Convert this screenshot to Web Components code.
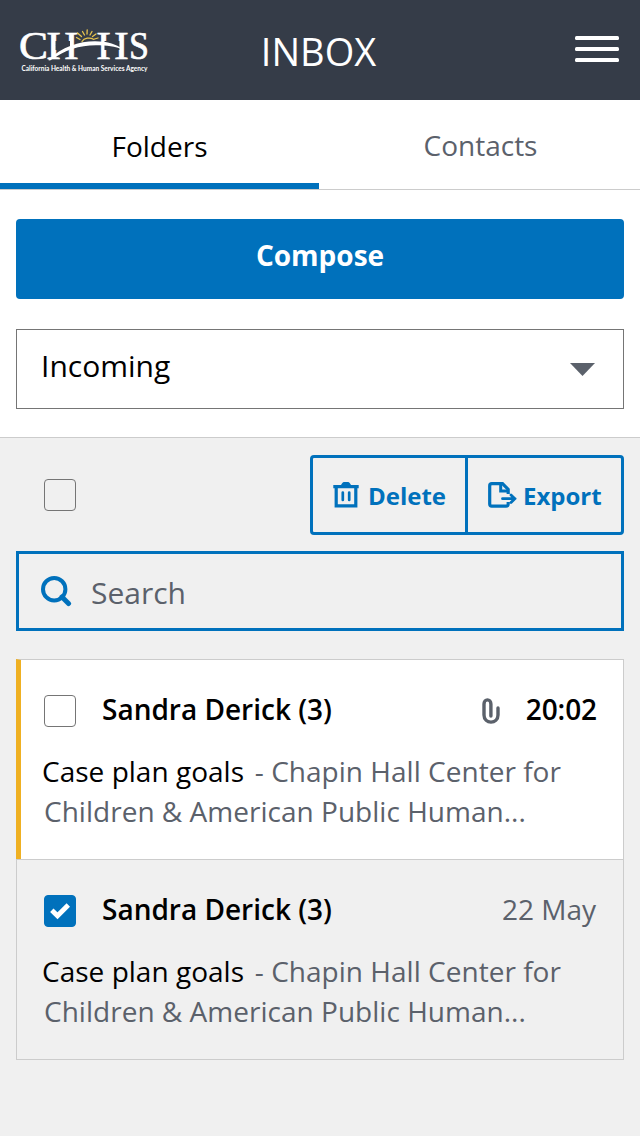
<!DOCTYPE html>
<html lang="en">
<head>
<meta charset="utf-8">
<title>Inbox</title>
<style>
html,body{margin:0;padding:0}
body{--blue:#0071bc;--gray:#5b616b;--line:#cccccc;--page:#f0f0f0;background:var(--page);width:640px;min-height:1136px;font-family:"Open Sans","Noto Sans",sans-serif;color:#000;overflow-x:hidden}
</style>
</head>
<body>
<inbox-app></inbox-app>
<script>
function define(name, html, setup) {
  customElements.define(name, class extends HTMLElement {
    constructor() {
      super();
      const t = document.createElement('template');
      t.innerHTML = '<style>*{box-sizing:border-box}:host{display:block;box-sizing:border-box}</style>' + html;
      this.attachShadow({ mode: 'open' }).appendChild(t.content.cloneNode(true));
      if (setup) setup(this, this.shadowRoot);
    }
  });
}

define('agency-logo', `
<style>:host{width:132px;height:48px;margin-top:4px}svg{display:block;overflow:visible}</style>
<svg width="132" height="48" viewBox="18 27 132 48" fill="#fff" font-family="Liberation Serif,serif">
  <defs>
    <clipPath id="stems"><path d="M18 27H150V41H18ZM18 41H55.500V50H18ZM70 41H104.500V50H70ZM119.500 41H150V50H119.500ZM18 50H150V64H18Z"/></clipPath>
  </defs>
  <g font-size="41" clip-path="url(#stems)" stroke="#fff" stroke-width="0.700">
    <text x="19" y="59" textLength="29" lengthAdjust="spacingAndGlyphs">C</text>
    <text x="46.500" y="59" textLength="32" lengthAdjust="spacingAndGlyphs">H</text>
    <text x="96.500" y="59" textLength="32" lengthAdjust="spacingAndGlyphs">H</text>
    <text x="129" y="59" textLength="20" lengthAdjust="spacingAndGlyphs">S</text>
  </g>
  <path d="M48 60C62 47 79 41.300 95 41.300C108 41.300 117 44.500 123 49.500C115 46.500 107 45.200 96 45.200C79 45.200 65 50 50 60.500Z"/>
  <g fill="none" stroke="#e8c54e" stroke-width="1.300" stroke-linecap="round">
    <path d="M82 41.500C84 38 90 37 93.500 39.300M80 39.500L76.500 37.500M81.500 36.500L77.500 33M84.500 35L82.500 31.500M87 34L87.200 29.800M90 35L92 31.500M92.500 36.500L96 34M94.500 39L98 38"/>
  </g>
  <text x="21.500" y="70.900" font-family="Lato,sans-serif" font-size="6.500" font-weight="700" textLength="126" lengthAdjust="spacingAndGlyphs">California Health &amp; Human Services Agency</text>
</svg>`);

define('app-header', `
<style>
:host{display:grid;grid-template-columns:1fr auto 1fr;align-items:center;height:100px;background:#353c48;color:#fff;padding:0 21px 2px 18px}
h1{margin:4px 0 0;font-size:38px;font-weight:400;line-height:52px}
svg{justify-self:end;display:block}
</style>
<agency-logo></agency-logo><h1><slot></slot></h1>
<svg width="44" height="26" viewBox="0 0 44 26" fill="#fff"><rect width="44" height="4" rx="1.500"/><rect y="11" width="44" height="4" rx="1.500"/><rect y="22" width="44" height="4" rx="1.500"/></svg>`);

define('tab-item', `
<style>
:host{height:89px;padding-top:25px;padding-left:2px;text-align:center;font-size:28px;line-height:40px;color:var(--gray)}
:host([active]){color:#000;padding-top:26px;padding-left:0;border-bottom:6px solid var(--blue)}
</style><slot></slot>`);

define('tab-bar', `
<style>:host{display:grid;grid-template-columns:319px 1fr;height:90px;background:#fff;border-bottom:1px solid var(--line)}</style><slot></slot>`);

define('compose-button', `
<style>
button{display:block;width:100%;height:80px;padding:0 0 8px;border:0;border-radius:4px;background:var(--blue);color:#fff;font:700 28px/40px "Open Sans",sans-serif}
</style><button><slot></slot></button>`);

define('folder-select', `
<style>
:host{display:flex;align-items:center;justify-content:space-between;height:80px;border:1px solid #757575;padding:0 27px 0 24px;background:#fff;font-size:30px;line-height:40px}
span{padding-bottom:6px}svg{display:block}
</style><span><slot></slot></span>
<svg width="26" height="13" viewBox="0 0 26 13" fill="#5b616b"><path d="M0 0H25L12.500 13Z"/></svg>`);

define('check-box', `
<style>
:host{width:32px;height:32px;border:1px solid #757575;border-radius:4px;flex:none}
:host([checked]){border-color:var(--blue);background:var(--blue)}
svg{display:none}:host([checked]) svg{display:block}
</style><svg width="30" height="30" viewBox="0 0 30 30" fill="none" stroke="#fff" stroke-width="4.800"><path d="M6.800 14.200L12.500 19.800L23.300 9"/></svg>`);

define('action-button', `
<style>
:host{display:flex;align-items:center;color:var(--blue);font-size:24px;font-weight:700;line-height:34px;border-left:3px solid var(--blue)}
:host(:first-child){border-left:0}
span{padding-top:2px}
::slotted(svg){display:block;flex:none}
</style><slot name="icon"></slot><span><slot></slot></span>`);

define('action-group', `
<style>:host{display:grid;grid-template-columns:152px 156px;width:314px;height:80px;border:3px solid var(--blue);border-radius:4px}</style><slot></slot>`);

define('search-field', `
<style>
:host{display:flex;align-items:center;height:80px;border:3px solid var(--blue);padding:0 21px;color:var(--gray);font-size:30px;line-height:40px}
svg{display:block;flex:none}span{margin:4px 0 0 19px}
</style>
<svg width="32" height="32" viewBox="0 0 32 32" fill="none" stroke="#0071bc"><circle cx="14.200" cy="14.200" r="11.200" stroke-width="4"/><path d="M22 22L28.500 28.500" stroke-width="5" stroke-linecap="round"/></svg>
<span><slot></slot></span>`);

define('message-row', `
<style>
:host{height:200px;border:1px solid var(--line);border-bottom:0;padding:31px 27px 0 25px}
:host([unread]){background:#fff;border-left:5px solid #efb022;padding-left:21px;padding-right:26px}
:host(:last-child){height:201px;border-bottom:1px solid var(--line)}
.top{display:flex;align-items:center;height:40px;padding-left:2px;font-size:28px;line-height:40px}
.name{font-weight:600;margin-left:26px;flex:1;padding-bottom:4px}
.time{color:var(--gray);padding-bottom:4px}
:host([unread]) .time{color:#000;font-weight:600;letter-spacing:-0.100px}
.clip{display:none;margin-right:26px}
:host([attachment]) .clip{display:block}
p{margin:20px 0 0;font-size:28px;line-height:40px;color:var(--gray);letter-spacing:0.020px}
.subject{color:#000;margin-right:3.500px}
.second{display:block;padding-left:2px}
</style>
<div class="top"><check-box></check-box><span class="name"><slot name="from"></slot></span>
<svg class="clip" width="18" height="26" viewBox="0 0 18 26" fill="none" stroke="#5b616b" stroke-width="3.400" stroke-linecap="round"><path d="M8.900 18V6C8.900 0.500 2 0.500 2 6V17C2 26.500 16 26.500 16 17V10"/></svg>
<span class="time"><slot name="time"></slot></span></div>
<p><span class="subject"><slot name="subject"></slot></span> <slot></slot><span class="second"><slot name="more"></slot></span></p>`,
(host, root) => { if (host.hasAttribute('checked')) root.querySelector('check-box').setAttribute('checked', ''); });

define('inbox-app', `
<style>
:host{width:640px;min-height:1136px;background:var(--page)}
.controls{display:grid;gap:30px;padding:29px 16px 28px;background:#fff;border-bottom:1px solid var(--line)}
.list{padding:17px 16px 0}
.tools{display:flex;align-items:center;justify-content:space-between;padding-left:28px;margin-bottom:16px}
.messages{margin-top:28px}
.trash{margin:0 9px 0 20px}.export{margin:0 6px 0 20px}
</style>
<app-header>INBOX</app-header>
<tab-bar><tab-item active>Folders</tab-item><tab-item>Contacts</tab-item></tab-bar>
<div class="controls"><compose-button>Compose</compose-button><folder-select>Incoming</folder-select></div>
<div class="list">
  <div class="tools"><check-box></check-box>
    <action-group>
      <action-button><svg slot="icon" class="trash" width="26" height="26" viewBox="0 0 26 26" fill="none" stroke="#0071bc" stroke-width="3"><path d="M0.300 4.600H25.700M3.200 4V23.800H22.800V4" stroke-width="3.200"/><path d="M7.500 4.500Q9 0 11 0H15Q17 0 18.500 4.500Z" fill="#0071bc" stroke="none"/><path d="M9.800 10.500V18M16.200 10.500V18" stroke-linecap="round" stroke-width="2.700"/></svg>Delete</action-button>
      <action-button><svg slot="icon" class="export" width="29" height="26" viewBox="0 0 29 26" fill="none" stroke="#0071bc" stroke-width="3.200"><path d="M20.200 12V7.500L14.500 1.700H3.800Q1.700 1.700 1.700 3.800V22Q1.700 24.100 3.800 24.100H18Q20.200 24.100 20.200 22V20"/><path d="M12.700 1V9H20.500" stroke-width="3"/><path d="M14.500 16.700H27M23 12.900L26.800 16.700L23 20.500" stroke-linecap="round" stroke-width="2.800"/></svg>Export</action-button>
    </action-group>
  </div>
  <search-field>Search</search-field>
  <div class="messages">
    <message-row unread attachment><span slot="from">Sandra Derick (3)</span><span slot="time">20:02</span><span slot="subject">Case plan goals</span>- Chapin Hall Center for<span slot="more">Children &amp; American Public Human...</span></message-row>
    <message-row checked><span slot="from">Sandra Derick (3)</span><span slot="time">22 May</span><span slot="subject">Case plan goals</span>- Chapin Hall Center for<span slot="more">Children &amp; American Public Human...</span></message-row>
  </div>
</div>`);
</script>
</body>
</html>
